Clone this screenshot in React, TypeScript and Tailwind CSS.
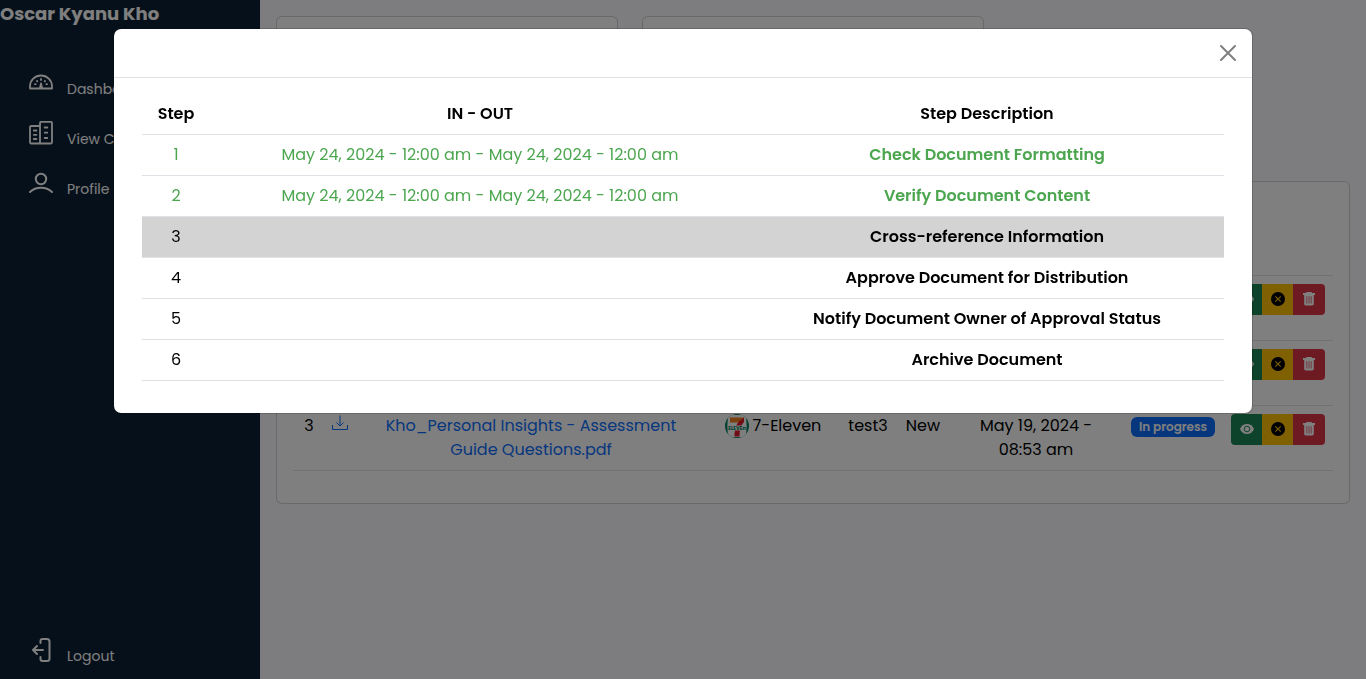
import React from "react";

type Step = { id: number; time: string; description: string; state: "done" | "current" | "pending" };

const steps: Step[] = [
  { id: 1, time: "May 24, 2024 - 12:00 am - May 24, 2024 - 12:00 am", description: "Check Document Formatting", state: "done" },
  { id: 2, time: "May 24, 2024 - 12:00 am - May 24, 2024 - 12:00 am", description: "Verify Document Content", state: "done" },
  { id: 3, time: "", description: "Cross-reference Information", state: "current" },
  { id: 4, time: "", description: "Approve Document for Distribution", state: "pending" },
  { id: 5, time: "", description: "Notify Document Owner of Approval Status", state: "pending" },
  { id: 6, time: "", description: "Archive Document", state: "pending" },
];

const rowStyles = {
  done: "text-[#4ca64f]",
  current: "bg-[#d3d3d3]",
  pending: "",
};

const stroke = {
  fill: "none",
  stroke: "currentColor",
  strokeWidth: 1.8,
  strokeLinecap: "round" as const,
  strokeLinejoin: "round" as const,
};

function GaugeIcon() {
  return (
    <svg viewBox="0 0 24 24" className="size-6" aria-hidden="true" {...stroke}>
      <path d="M1 17.500V15.500a11 11 0 0 1 22 0v2Z" />
      <path d="M12 8v1M6 13.200h.6M17.400 13.200h.6M8 10l.3.3M16 10l-.3.3" />
      <path d="M11 17 12 12.500l1 4.500Z" fill="currentColor" />
    </svg>
  );
}

function BuildingsIcon() {
  return (
    <svg viewBox="0 0 24 24" className="size-6" aria-hidden="true" {...stroke}>
      <path d="M11 22.500V2a1.200 1.200 0 0 1 1.200-1.200h9.600A1.200 1.200 0 0 1 23 2v19.300a1.200 1.200 0 0 1-1.200 1.200H2.200A1.200 1.200 0 0 1 1 21.300V6.200A1.200 1.200 0 0 1 2.200 5H11" />
      <path d="M15.700 6.500h2.600M15.700 11.700h2.600M15.700 17h2.600M4.800 9.500h2.600M4.800 13.800h2.600M4.800 18h2.600" />
    </svg>
  );
}

function UserIcon() {
  return (
    <svg viewBox="0 0 24 24" className="size-6" aria-hidden="true" {...stroke} strokeWidth={2}>
      <circle cx="12" cy="8" r="5.200" />
      <path d="M1 21c3-2.800 6.700-4.200 11-4.200s8 1.400 11 4.200" />
    </svg>
  );
}

function LogoutIcon() {
  return (
    <svg viewBox="0 0 24 24" className="size-6" aria-hidden="true" {...stroke} strokeWidth={2}>
      <path d="M11.500 5V3a2 2 0 0 1 2-2H18a2.500 2.500 0 0 1 2.500 2.500v17A2.500 2.500 0 0 1 18 23h-4.500a2 2 0 0 1-2-2v-2" />
      <path d="M14 12H4.500M8 8l-4 4 4 4" />
    </svg>
  );
}

function DownloadIcon() {
  return (
    <svg viewBox="0 0 16 16" className="size-4" aria-hidden="true" fill="none" stroke="currentColor" strokeWidth="1">
      <path d="M.5 10v4.500h15V10M8 .5v10.500M4.500 7.500 8 11l3.500-3.500" />
    </svg>
  );
}

function EyeIcon() {
  return (
    <svg viewBox="0 0 16 16" className="size-4" aria-hidden="true">
      <path fill="currentColor" d="M8 3C4.800 3 2.200 4.900 1 8c1.200 3.100 3.800 5 7 5s5.800-1.900 7-5c-1.200-3.100-3.800-5-7-5Z" />
      <circle cx="8" cy="8" r="2.800" fill="none" stroke="#198754" strokeWidth="1" />
    </svg>
  );
}

function CancelIcon() {
  return (
    <svg viewBox="0 0 16 16" className="size-4" aria-hidden="true">
      <circle cx="8" cy="8" r="7" fill="#000" />
      <path d="m5.300 5.300 5.400 5.400m0-5.400-5.400 5.400" stroke="#ffc107" strokeWidth="1.100" />
    </svg>
  );
}

function TrashIcon() {
  return (
    <svg viewBox="0 0 16 16" className="size-4" aria-hidden="true">
      <path fill="currentColor" d="M5.500 1h5l.6 1h2.900v2H2V2h2.900Z" />
      <path fill="currentColor" d="M3.200 4h9.600v8.800c0 1-.6 1.600-1.600 1.600H4.800c-1 0-1.600-.6-1.600-1.600Z" />
      <path d="M5.800 5.200v7.300M8 5.200v7.300M10.200 5.200v7.300" stroke="#dc3545" strokeWidth=".7" />
    </svg>
  );
}

function StoreLogo() {
  return (
    <svg viewBox="0 0 24 24" className="size-6 shrink-0" aria-hidden="true">
      <defs>
        <clipPath id="store-round">
          <circle cx="12" cy="12" r="12" />
        </clipPath>
      </defs>
      <g clipPath="url(#store-round)">
        <rect width="24" height="24" fill="#008061" />
        <path d="M3.500 1h17c1.500 7 1.500 15 0 22h-17C2 16 2 8 3.500 1Z" fill="#fff" />
        <path d="M5 3.500h14l-3.500 5H5Z" fill="#f58220" />
        <path d="M19 3.500v4.500c-3 3-4.500 8-4.500 14.500H9.500C9.500 15 11 10.500 14.500 7Z" fill="#e31b2d" />
        <rect x="4" y="11.500" width="16" height="5" fill="#fff" />
        <text x="12" y="15.800" textAnchor="middle" fontSize="5" fontWeight="700" fill="#008061">
          ELEVEn
        </text>
      </g>
    </svg>
  );
}

function NavItem({ icon, label }: { icon: React.ReactNode; label: string }) {
  return (
    <a href="#" className="flex h-[50px] items-center gap-3.5 pl-[29px] text-sm whitespace-nowrap text-white">
      {icon}
      <span className="pt-3">{label}</span>
    </a>
  );
}

function RowActions() {
  return (
    <div className="flex h-[31px] w-[94px] overflow-hidden rounded">
      <button type="button" aria-label="View" className="flex w-[31px] items-center justify-center bg-[#198754] text-white">
        <EyeIcon />
      </button>
      <button type="button" aria-label="Cancel" className="flex w-[31px] items-center justify-center bg-[#ffc107]">
        <CancelIcon />
      </button>
      <button type="button" aria-label="Delete" className="flex flex-1 items-center justify-center bg-[#dc3545] text-white">
        <TrashIcon />
      </button>
    </div>
  );
}

function EmptyRow() {
  return (
    <tr className="h-[65px] border-b border-[#dee2e6] align-top">
      <td colSpan={8} />
      <td className="p-2">
        <RowActions />
      </td>
    </tr>
  );
}

function Documents() {
  return (
    <section className="mt-6 rounded-md border border-black/[0.175] bg-white px-4 pt-[52px] pb-8">
      <table className="w-full table-fixed border-collapse text-center text-base leading-6 text-black">
        <colgroup>
          <col className="w-8" />
          <col className="w-[30px]" />
          <col />
          <col className="w-[132px]" />
          <col className="w-[58px]" />
          <col className="w-[52px]" />
          <col className="w-[174px]" />
          <col className="w-[100px]" />
          <col className="w-[110px]" />
        </colgroup>
        <thead>
          <tr className="h-[41px] border-b border-[#dee2e6]">
            <td colSpan={9} />
          </tr>
        </thead>
        <tbody>
          <EmptyRow />
          <EmptyRow />
          <tr className="h-[65px] border-b border-[#dee2e6] align-top">
            <td className="p-2">3</td>
            <td className="py-2">
              <a href="#" aria-label="Download" className="flex justify-center pt-px text-[#0d6efd]">
                <DownloadIcon />
              </a>
            </td>
            <td className="px-7 py-2">
              <a href="#" className="text-[#0d6efd]">
                Kho_Personal Insights - Assessment Guide Questions.pdf
              </a>
            </td>
            <td className="py-2">
              <div className="flex items-center justify-center gap-1">
                <StoreLogo />
                <span>7-Eleven</span>
              </div>
            </td>
            <td className="py-2">test3</td>
            <td className="py-2">New</td>
            <td className="px-6 py-2">May 19, 2024 - 08:53 am</td>
            <td className="p-2">
              <span className="mt-[3px] flex h-5 items-center justify-center rounded-md bg-[#0d6efd] text-xs font-semibold whitespace-nowrap text-white">
                In progress
              </span>
            </td>
            <td className="p-2">
              <RowActions />
            </td>
          </tr>
        </tbody>
      </table>
    </section>
  );
}

function StepsDialog() {
  return (
    <div className="fixed inset-0 bg-black/50 px-4 pt-7">
      <div
        role="dialog"
        aria-modal="true"
        aria-label="Document steps"
        className="mx-auto max-w-[1140px] rounded-lg border border-black/[0.175] bg-white bg-clip-padding text-black"
      >
        <header className="flex h-[49px] items-center justify-end border-b border-[#dee2e6] px-4">
          <button type="button" aria-label="Close" className="flex size-4 items-center justify-center text-black/50">
            <svg viewBox="0 0 16 16" className="size-4 shrink-0" stroke="currentColor" strokeWidth="2" strokeLinecap="round" aria-hidden="true">
              <path d="m1 1 14 14M15 1 1 15" />
            </svg>
          </button>
        </header>
        <div className="px-7 pt-4 pb-8">
          <table className="w-full table-fixed border-collapse text-center text-base leading-6">
            <colgroup>
              <col className="w-[68px]" />
              <col className="w-[540px]" />
              <col />
            </colgroup>
            <thead>
              <tr className="border-b border-[#dee2e6]">
                <th className="p-2 font-semibold">Step</th>
                <th className="p-2 font-semibold">IN - OUT</th>
                <th className="p-2 font-semibold">Step Description</th>
              </tr>
            </thead>
            <tbody>
              {steps.map((step) => (
                <tr key={step.id} className={`border-b border-[#dee2e6] ${rowStyles[step.state]}`}>
                  <td className="p-2">{step.id}</td>
                  <td className="p-2">{step.time}</td>
                  <td className="p-2 font-semibold">{step.description}</td>
                </tr>
              ))}
            </tbody>
          </table>
        </div>
      </div>
    </div>
  );
}

export default function App() {
  return (
    <div className="flex min-h-screen bg-[#fbfbfe] font-[Poppins,Inter,sans-serif]">
      <aside className="flex w-[260px] shrink-0 flex-col bg-[#0d2135]">
        <h1 className="text-lg leading-7 font-bold whitespace-nowrap text-white">Oscar Kyanu Kho</h1>
        <nav className="mt-[30px] flex flex-1 flex-col">
          <NavItem icon={<GaugeIcon />} label="Dashboard" />
          <NavItem icon={<BuildingsIcon />} label="View Company" />
          <NavItem icon={<UserIcon />} label="Profile" />
          <div className="mt-auto pb-1">
            <NavItem icon={<LogoutIcon />} label="Logout" />
          </div>
        </nav>
      </aside>
      <main className="min-w-0 flex-1 p-4">
        <div className="grid grid-cols-3 gap-6">
          <div className="h-[141px] rounded-md border border-black/[0.175] bg-white" />
          <div className="h-[141px] rounded-md border border-black/[0.175] bg-white" />
        </div>
        <Documents />
      </main>
      <StepsDialog />
    </div>
  );
}
